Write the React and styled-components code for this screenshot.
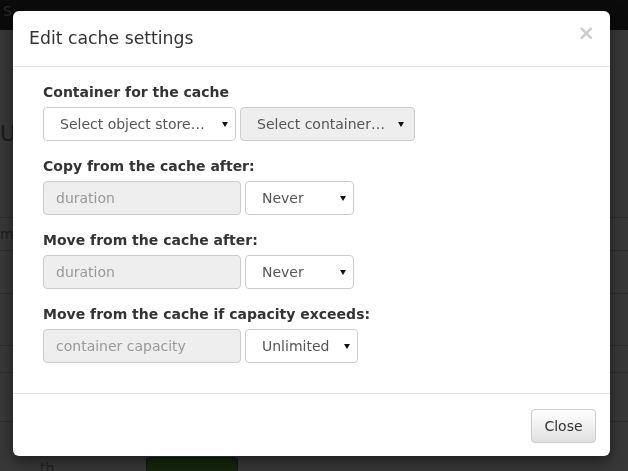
import React from 'react';
import styled, { createGlobalStyle } from 'styled-components';

const GlobalStyle = createGlobalStyle`
  html, body {
    margin: 0;
    padding: 0;
    background: #383838;
    font-family: "DejaVu Sans", "Noto Sans", sans-serif;
    overflow: hidden;
  }
  * { box-sizing: border-box; }
`;

// page behind the backdrop (already darkened)
const Page = styled.div`
  width: 628px;
  height: 471px;
  display: flex;
  flex-direction: column;
`;

const Navbar = styled.div`
  height: 30px;
  flex: none;
  background: #0b0b0b;
  color: #2a2a2a;
  font-size: 14px;
  padding: 3px 3px;
`;

const PageBody = styled.div`
  flex: 1;
  display: flex;
  flex-direction: column;
  padding-top: 88px;
`;

const PageTitle = styled.div`
  font-size: 22px;
  color: #1b1b1b;
  line-height: 24px;
  padding-top: 4px;
  height: 99px;
`;

const TableRow = styled.div`
  height: ${(p) => p.h}px;
  flex: none;
  border-top: 1px solid #2d2d2d;
  color: #202020;
  font-size: 14px;
  padding: ${(p) => p.pt || 8}px 0 0 ${(p) => p.indent || 0}px;
  display: flex;
  align-items: flex-start;
  gap: 92px;
`;

const GreenButton = styled.div`
  width: 92px;
  height: 30px;
  margin-top: -3px;
  border-radius: 4px;
  background: #15260f;
  border: 1px solid #0f1c0b;
`;

const Overlay = styled.div`
  position: fixed;
  inset: 0;
  display: flex;
  align-items: flex-start;
  padding: 11px 0 0 13px;
`;

const Dialog = styled.div`
  width: 597px;
  background: #fff;
  border-radius: 6px;
  box-shadow: 0 5px 15px rgba(0, 0, 0, 0.5);
  color: #333;
`;

const Header = styled.div`
  height: 56px;
  padding: 0 15px 0 16px;
  display: flex;
  align-items: center;
  justify-content: space-between;
  border-bottom: 1px solid #e5e5e5;
`;

const Title = styled.h4`
  margin: 0;
  font-size: 17.3px;
  font-weight: 400;
  color: #333;
  padding-bottom: 2px;
`;

const CloseX = styled.span`
  font-family: "DejaVu Sans", sans-serif;
  font-size: 21px;
  font-weight: 700;
  color: #cdcdcd;
  line-height: 1;
  margin-top: -10px;
`;

const Body = styled.div`
  padding: 15px 30px;
`;

const Group = styled.div`
  margin-bottom: 15px;
`;

const Label = styled.div`
  font-size: 14px;
  font-weight: 700;
  color: #333;
  line-height: 20px;
  margin-bottom: 5px;
`;

const Row = styled.div`
  display: flex;
  gap: 4px;
`;

const Input = styled.div`
  width: ${(p) => p.w}px;
  height: 34px;
  border: 1px solid #ccc;
  border-radius: 4px;
  background: #eee;
  color: #999;
  font-size: 14px;
  display: flex;
  align-items: center;
  padding-left: 12px;
`;

const Select = styled.div`
  width: ${(p) => p.w}px;
  height: 34px;
  border: 1px solid #ccc;
  border-radius: 4px;
  background: ${(p) => (p.disabled ? '#eee' : '#fff')};
  color: #555;
  font-size: 14px;
  display: flex;
  align-items: center;
  justify-content: space-between;
  padding: 0 ${(p) => p.pr || 7}px 0 16px;
`;

const Caret = styled.span`
  width: 0;
  height: 0;
  border-left: 3px solid transparent;
  border-right: 3px solid transparent;
  border-top: 5px solid #111;
  margin-top: 1px;
`;

const Footer = styled.div`
  border-top: 1px solid #e5e5e5;
  padding: 15px 14px 13px;
  display: flex;
  justify-content: flex-end;
`;

const Button = styled.button`
  height: 34px;
  width: 65px;
  border: 1px solid #ccc;
  border-radius: 4px;
  background: linear-gradient(#fff, #e0e0e0);
  color: #333;
  font-family: inherit;
  font-size: 14px;
  padding: 0;
`;

const Field = ({ label, children }) => (
  <Group>
    <Label>{label}</Label>
    <Row>{children}</Row>
  </Group>
);

const Dropdown = ({ w, pr, disabled, children }) => (
  <Select w={w} pr={pr} disabled={disabled}>
    <span>{children}</span>
    <Caret />
  </Select>
);

export default function App() {
  return (
    <>
      <GlobalStyle />
      <Page>
        <Navbar>S</Navbar>
        <PageBody>
          <PageTitle>U</PageTitle>
          <TableRow h={33}>me</TableRow>
          <TableRow h={43} />
          <TableRow h={52} />
          <TableRow h={27} />
          <TableRow h={49} />
          <TableRow h={50} indent={40} pt={38}>
            <span>th</span>
            <GreenButton />
          </TableRow>
        </PageBody>
      </Page>
      <Overlay>
        <Dialog>
          <Header>
            <Title>Edit cache settings</Title>
            <CloseX>×</CloseX>
          </Header>
          <Body>
            <Field label="Container for the cache">
              <Dropdown w={193}>Select object store…</Dropdown>
              <Dropdown w={175} pr={10} disabled>Select container…</Dropdown>
            </Field>
            <Field label="Copy from the cache after:">
              <Input w={198}>duration</Input>
              <Dropdown w={109}>Never</Dropdown>
            </Field>
            <Field label="Move from the cache after:">
              <Input w={198}>duration</Input>
              <Dropdown w={109}>Never</Dropdown>
            </Field>
            <Field label="Move from the cache if capacity exceeds:">
              <Input w={198}>container capacity</Input>
              <Dropdown w={113}>Unlimited</Dropdown>
            </Field>
          </Body>
          <Footer>
            <Button>Close</Button>
          </Footer>
        </Dialog>
      </Overlay>
    </>
  );
}
